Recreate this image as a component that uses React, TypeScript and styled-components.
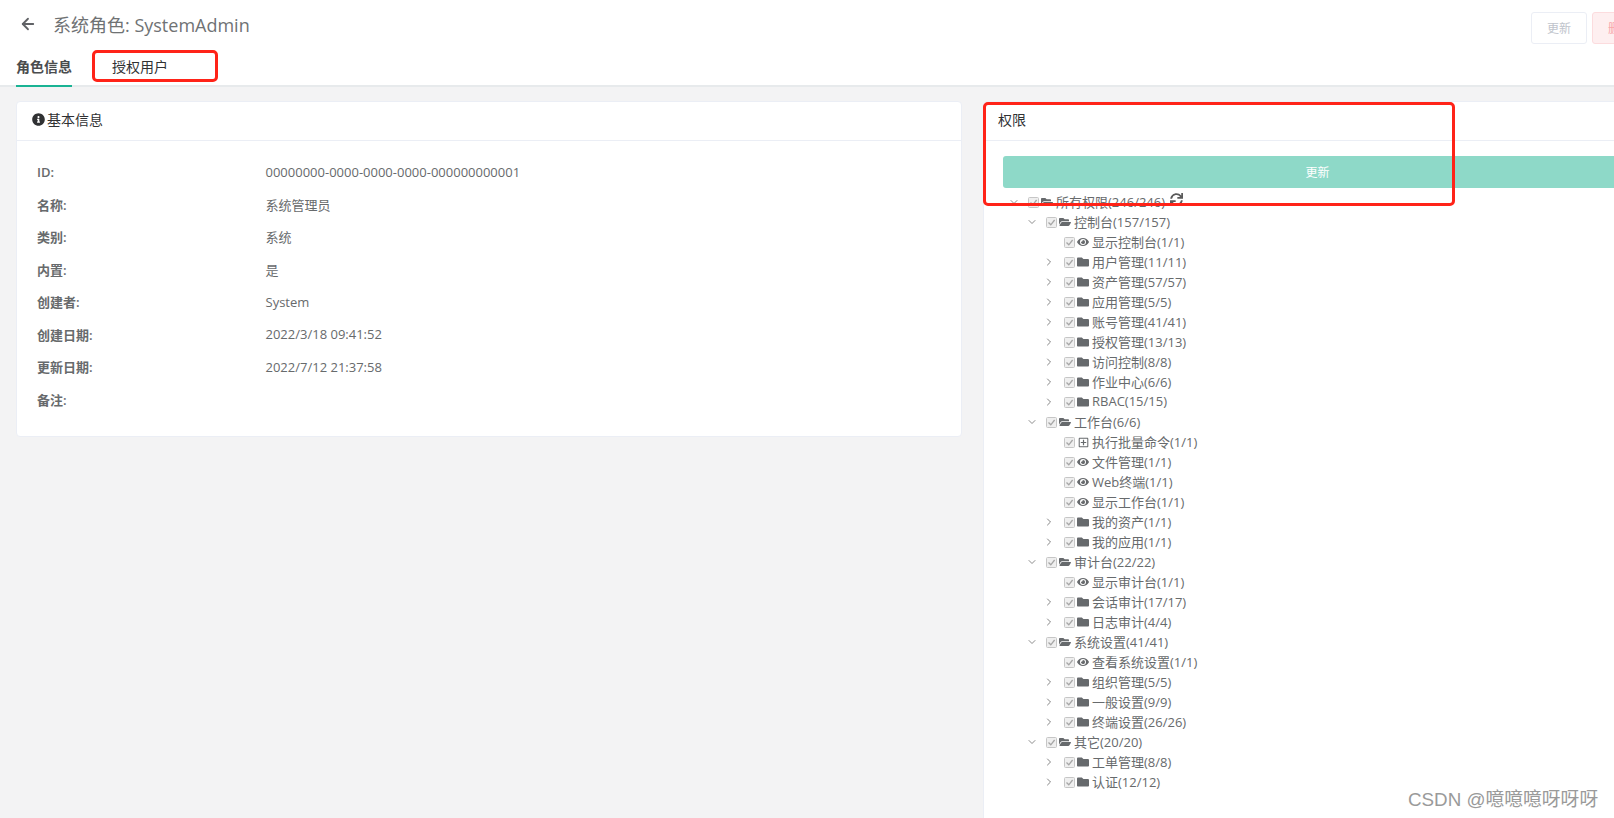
import { createGlobalStyle } from 'styled-components'
import styled from 'styled-components'
import { ArrowLeft, ChevronDown, ChevronRight } from 'lucide-react'
import { FaEye, FaFolder, FaFolderOpen, FaInfoCircle, FaRegPlusSquare, FaSync } from 'react-icons/fa'

type NodeKind = 'folder' | 'open' | 'eye' | 'plus'
type TreeNode = { level: number; label: string; kind: NodeKind; toggle?: 'open' | 'closed'; refresh?: boolean }

const infoRows = [
  ['ID:', '00000000-0000-0000-0000-000000000001'],
  ['名称:', '系统管理员'],
  ['类别:', '系统'],
  ['内置:', '是'],
  ['创建者:', 'System'],
  ['创建日期:', '2022/3/18 09:41:52'],
  ['更新日期:', '2022/7/12 21:37:58'],
  ['备注:', ''],
]

const branch = (level: number, label: string): TreeNode => ({ level, label, kind: 'open', toggle: 'open' })
const sub = (label: string): TreeNode => ({ level: 2, label, kind: 'folder', toggle: 'closed' })
const leaf = (label: string, kind: NodeKind = 'eye'): TreeNode => ({ level: 2, label, kind })

const treeNodes: TreeNode[] = [
  { level: 0, label: '所有权限(246/246)', kind: 'open', toggle: 'open', refresh: true },
  branch(1, '控制台(157/157)'),
  leaf('显示控制台(1/1)'),
  sub('用户管理(11/11)'),
  sub('资产管理(57/57)'),
  sub('应用管理(5/5)'),
  sub('账号管理(41/41)'),
  sub('授权管理(13/13)'),
  sub('访问控制(8/8)'),
  sub('作业中心(6/6)'),
  sub('RBAC(15/15)'),
  branch(1, '工作台(6/6)'),
  leaf('执行批量命令(1/1)', 'plus'),
  leaf('文件管理(1/1)'),
  leaf('Web终端(1/1)'),
  leaf('显示工作台(1/1)'),
  sub('我的资产(1/1)'),
  sub('我的应用(1/1)'),
  branch(1, '审计台(22/22)'),
  leaf('显示审计台(1/1)'),
  sub('会话审计(17/17)'),
  sub('日志审计(4/4)'),
  branch(1, '系统设置(41/41)'),
  leaf('查看系统设置(1/1)'),
  sub('组织管理(5/5)'),
  sub('一般设置(9/9)'),
  sub('终端设置(26/26)'),
  branch(1, '其它(20/20)'),
  sub('工单管理(8/8)'),
  sub('认证(12/12)'),
]

const kindIcons = { folder: FaFolder, open: FaFolderOpen, eye: FaEye, plus: FaRegPlusSquare }

const Checked = () => (
  <CheckSvg viewBox="0 0 11 11">
    <rect x="0.5" y="0.5" width="10" height="10" rx="1" fill="#efefef" stroke="#c6c6c6" />
    <path d="M2.5 5.5 L4.8 7.8 L8.6 3" fill="none" stroke="#a6a6a6" strokeWidth="1.3" />
  </CheckSvg>
)

export default function App() {
  return (
    <Page>
      <GlobalStyle />
      <Header>
        <TopRow>
          <TitleWrap>
            <BackIcon size={18} strokeWidth={2.4} />
            <Title>系统角色: SystemAdmin</Title>
          </TitleWrap>
          <Actions>
            <ActionButton>更新</ActionButton>
            <ActionButton $danger>删除</ActionButton>
          </Actions>
        </TopRow>
        <Tabs>
          <Tab $active>角色信息</Tab>
          <Tab>授权用户</Tab>
        </Tabs>
      </Header>
      <Main>
        <InfoCard>
          <CardHeader>
            <FaInfoCircle size={13} />
            基本信息
          </CardHeader>
          <InfoBody>
            {infoRows.map(([name, value]) => (
              <InfoRow key={name}>
                <InfoLabel>{name}</InfoLabel>
                <span>{value}</span>
              </InfoRow>
            ))}
          </InfoBody>
        </InfoCard>
        <PermCard>
          <PermHeader>权限</PermHeader>
          <PermBody>
            <SubmitButton>更新</SubmitButton>
            <Tree>
              {treeNodes.map((node) => {
                const Icon = kindIcons[node.kind]
                return (
                  <TreeRow key={node.label} $level={node.level}>
                    <Switcher>
                      {node.toggle === 'open' && <ChevronDown size={12} strokeWidth={1.5} />}
                      {node.toggle === 'closed' && <ClosedChevron size={12} strokeWidth={1.6} />}
                    </Switcher>
                    <Checked />
                    <IconBox>
                      <Icon size={node.kind === 'plus' ? 11 : 12} />
                    </IconBox>
                    <span>{node.label}</span>
                    {node.refresh && (
                      <RefreshIcon>
                        <FaSync size={13} />
                      </RefreshIcon>
                    )}
                  </TreeRow>
                )
              })}
            </Tree>
          </PermBody>
        </PermCard>
      </Main>
      <TabMark />
      <PermMark />
      <Watermark>CSDN @噫噫噫呀呀呀</Watermark>
    </Page>
  )
}

const GlobalStyle = createGlobalStyle`
  html, body {
    margin: 0;
    height: 100%;
    overflow: hidden;
    background: #f3f3f4;
  }
  * {
    box-sizing: border-box;
  }
`
const Page = styled.div`
  position: relative;
  width: 1668px;
  height: 818px;
  overflow: hidden;
  display: flex;
  flex-direction: column;
  background: #f3f3f4;
  color: #676a6c;
  font-family: 'Open Sans', 'Noto Sans CJK SC', sans-serif;
  font-size: 13px;
`
const Header = styled.div`
  height: 87px;
  flex-shrink: 0;
  background: #fff;
  border-bottom: 2px solid #e7eaec;
  padding: 12px 20px 0 16px;
`
const TopRow = styled.div`
  display: flex;
  justify-content: space-between;
  height: 32px;
`
const TitleWrap = styled.div`
  display: flex;
  align-items: center;
  height: 24px;
  padding-left: 3px;
`
const BackIcon = styled(ArrowLeft)`
  color: #606266;
`
const Title = styled.div`
  margin-left: 16px;
  font-size: 18px;
  color: #6f7274;
`
const Actions = styled.div`
  display: flex;
  gap: 5px;
`
const ActionButton = styled.div<{ $danger?: boolean }>`
  width: 56px;
  height: 32px;
  display: flex;
  align-items: center;
  justify-content: center;
  border-radius: 3px;
  font-size: 12px;
  background: ${(p) => (p.$danger ? '#feeff0' : '#fff')};
  border: 1px solid ${(p) => (p.$danger ? '#fcdcde' : '#ebeef5')};
  color: ${(p) => (p.$danger ? '#f9a7ab' : '#c0c4cc')};
`
const Tabs = styled.div`
  display: flex;
  gap: 40px;
  height: 43px;
`
const Tab = styled.div<{ $active?: boolean }>`
  height: 43px;
  display: flex;
  align-items: center;
  padding-top: 3px;
  font-size: 14px;
  color: ${(p) => (p.$active ? '#4a4c4e' : '#303133')};
  font-weight: ${(p) => (p.$active ? 600 : 400)};
  border-bottom: 2px solid ${(p) => (p.$active ? '#1ab394' : 'transparent')};
`
const Main = styled.div`
  flex: 1;
  min-height: 0;
  display: flex;
  gap: 21px;
  padding: 14px 16px 0;
`
const Card = styled.div`
  background: #fff;
  border: 1px solid #ebeef5;
  border-radius: 4px;
`
const InfoCard = styled(Card)`
  width: 946px;
  height: 336px;
`
const PermCard = styled(Card)`
  width: 669px;
  height: 760px;
`
const CardHeader = styled.div`
  height: 39px;
  display: flex;
  align-items: center;
  gap: 2px;
  padding: 0 15px 4px 15px;
  border-bottom: 1px solid #ebeef5;
  font-size: 14px;
  color: #303133;
`
const PermHeader = styled(CardHeader)`
  padding-left: 14px;
`
const InfoBody = styled.div`
  padding: 14.5px 20px;
`
const InfoRow = styled.div`
  display: grid;
  grid-template-columns: 228.5px 1fr;
  align-items: center;
  height: 32.5px;
`
const InfoLabel = styled.span`
  font-weight: 600;
`
const PermBody = styled.div`
  padding: 15px 19px 0;
`
const SubmitButton = styled.div`
  height: 32px;
  display: flex;
  align-items: center;
  justify-content: center;
  border-radius: 3px;
  background: #8ed9c8;
  color: #fff;
  font-size: 12px;
`
const Tree = styled.div`
  margin: 3px 0 0 2px;
`
const TreeRow = styled.div<{ $level: number }>`
  display: flex;
  align-items: center;
  height: 20px;
  padding-left: ${(p) => p.$level * 18}px;
  color: #676a6c;
`
const Switcher = styled.span`
  width: 18px;
  margin: 2px 5px 0 0;
  display: flex;
  justify-content: center;
  color: #666;
`
const ClosedChevron = styled(ChevronRight)`
  margin-left: -3px;
`
const CheckSvg = styled.svg`
  width: 11px;
  height: 11px;
  flex-shrink: 0;
  margin: 2px 1px 0 0;
`
const IconBox = styled.span`
  width: 14px;
  margin: 2px 2px 0 0;
  display: flex;
  justify-content: center;
  color: #66696c;
`
const RefreshIcon = styled.span`
  display: flex;
  margin: -4px 0 0 5px;
  color: #5a5a5a;
`
const RedMark = styled.div`
  position: absolute;
  border: 3.5px solid #ff2318;
  border-radius: 5px;
  pointer-events: none;
`
const TabMark = styled(RedMark)`
  left: 92px;
  top: 50px;
  width: 126px;
  height: 32px;
`
const PermMark = styled(RedMark)`
  left: 983px;
  top: 102px;
  width: 472px;
  height: 104px;
`
const Watermark = styled.div`
  position: absolute;
  left: 1408px;
  top: 787px;
  font-family: 'Liberation Sans', 'Noto Sans CJK SC', sans-serif;
  font-size: 18.8px;
  line-height: 26px;
  white-space: nowrap;
  color: #9a9a9a;
`
